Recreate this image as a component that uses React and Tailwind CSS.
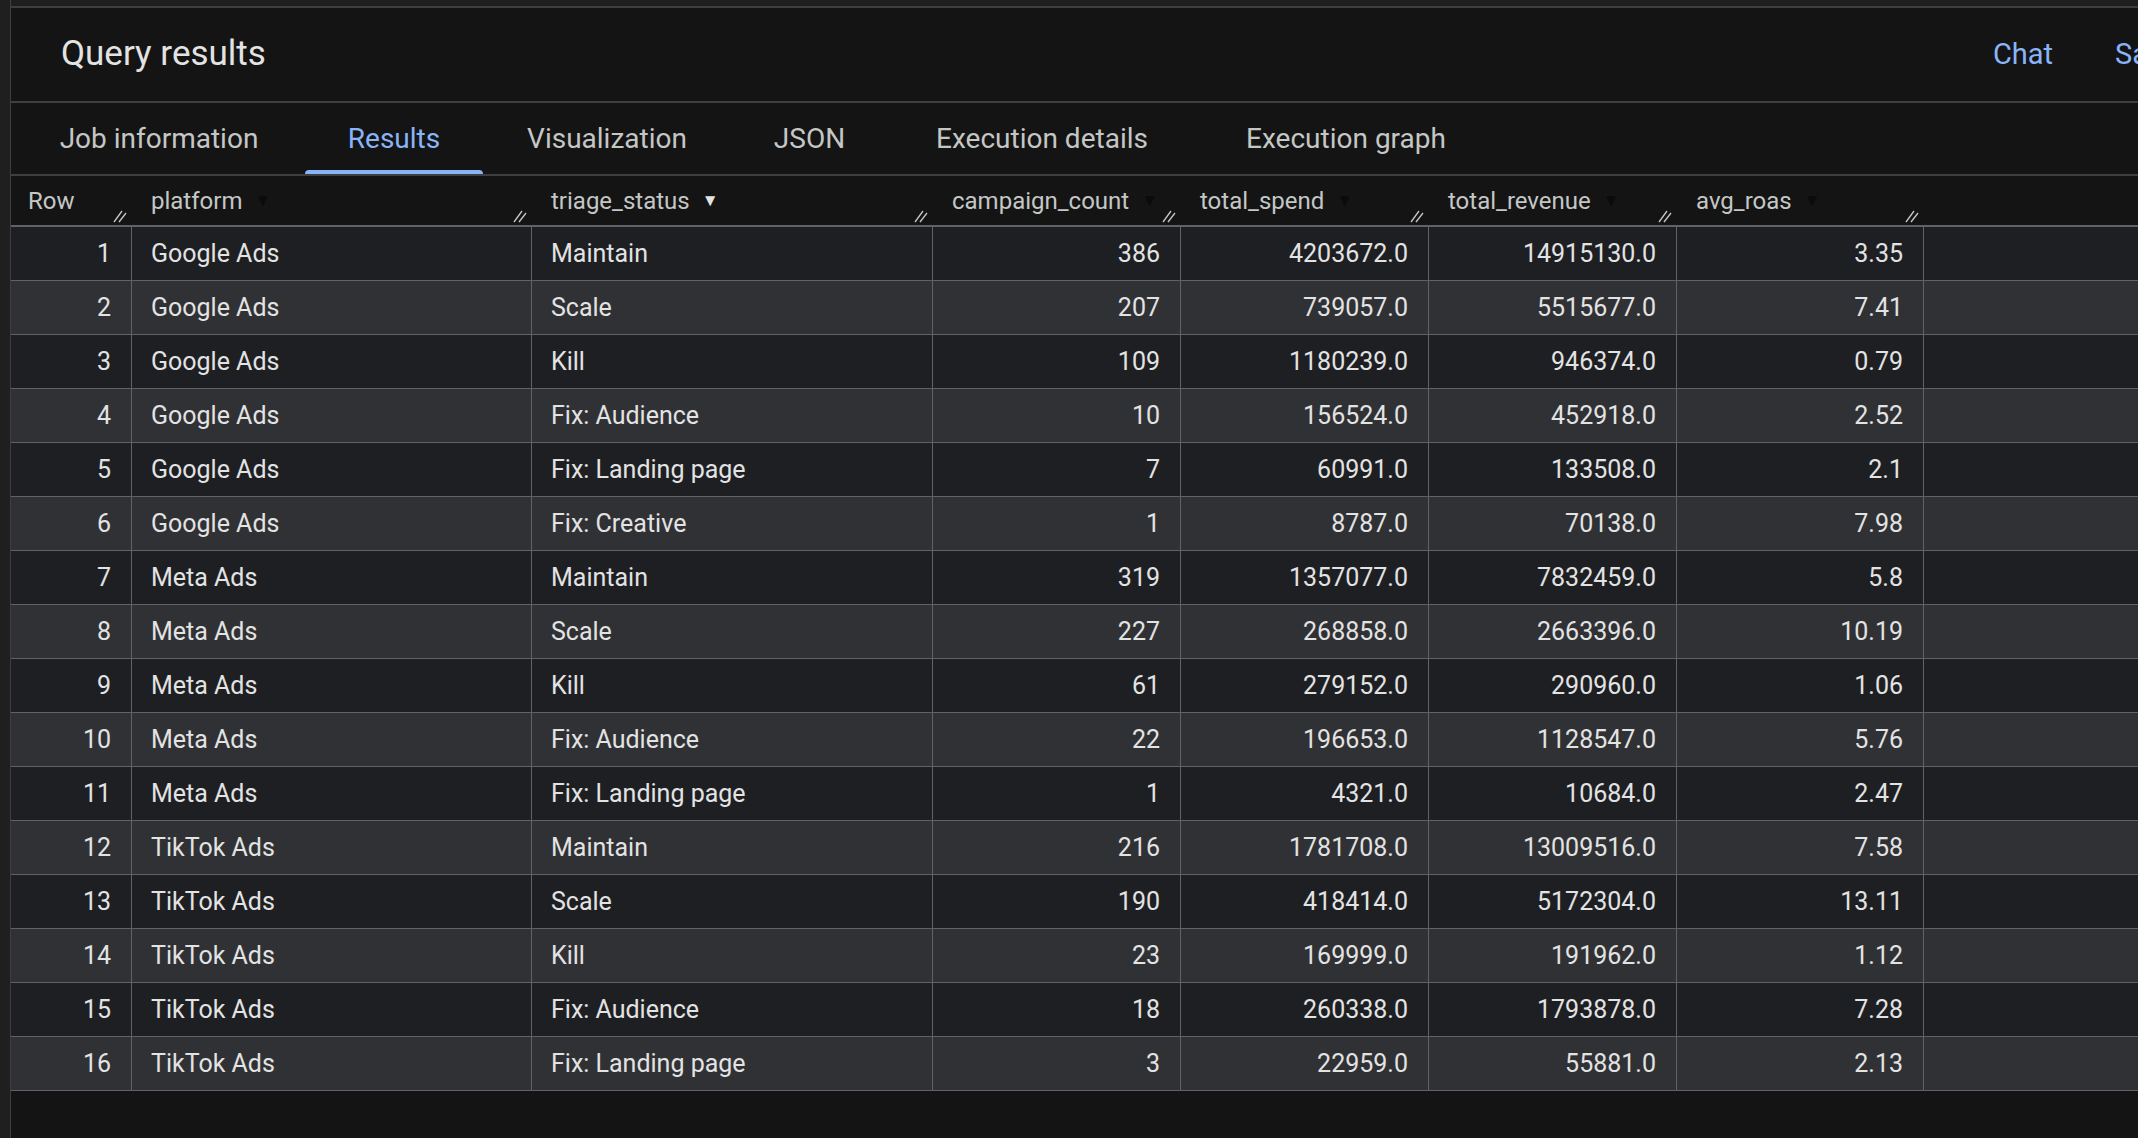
const rows = [
  [1, "Google Ads", "Maintain", 386, "4203672.0", "14915130.0", "3.35"],
  [2, "Google Ads", "Scale", 207, "739057.0", "5515677.0", "7.41"],
  [3, "Google Ads", "Kill", 109, "1180239.0", "946374.0", "0.79"],
  [4, "Google Ads", "Fix: Audience", 10, "156524.0", "452918.0", "2.52"],
  [5, "Google Ads", "Fix: Landing page", 7, "60991.0", "133508.0", "2.1"],
  [6, "Google Ads", "Fix: Creative", 1, "8787.0", "70138.0", "7.98"],
  [7, "Meta Ads", "Maintain", 319, "1357077.0", "7832459.0", "5.8"],
  [8, "Meta Ads", "Scale", 227, "268858.0", "2663396.0", "10.19"],
  [9, "Meta Ads", "Kill", 61, "279152.0", "290960.0", "1.06"],
  [10, "Meta Ads", "Fix: Audience", 22, "196653.0", "1128547.0", "5.76"],
  [11, "Meta Ads", "Fix: Landing page", 1, "4321.0", "10684.0", "2.47"],
  [12, "TikTok Ads", "Maintain", 216, "1781708.0", "13009516.0", "7.58"],
  [13, "TikTok Ads", "Scale", 190, "418414.0", "5172304.0", "13.11"],
  [14, "TikTok Ads", "Kill", 23, "169999.0", "191962.0", "1.12"],
  [15, "TikTok Ads", "Fix: Audience", 18, "260338.0", "1793878.0", "7.28"],
  [16, "TikTok Ads", "Fix: Landing page", 3, "22959.0", "55881.0", "2.13"],
];

const cols = [
  { name: "Row", w: "w-[121px]", sort: false },
  { name: "platform", w: "w-[400px]", sort: true },
  { name: "triage_status", w: "w-[401px]", sort: true, active: true },
  { name: "campaign_count", w: "w-[248px]", sort: true },
  { name: "total_spend", w: "w-[248px]", sort: true },
  { name: "total_revenue", w: "w-[248px]", sort: true },
  { name: "avg_roas", w: "w-[247px]", sort: true },
];

const tabs = [
  ["Job information", "w-[292px]"],
  ["Results", "w-[178px]"],
  ["Visualization", "w-[248px]"],
  ["JSON", "w-[157px]"],
  ["Execution details", "w-[308px]"],
  ["Execution graph", "w-[300px]"],
];

function Grip() {
  return (
    <svg width="16" height="16" viewBox="0 0 16 16" className="absolute right-[4px] bottom-[2px]">
      <path d="M2 15 L10 4 M7 15 L14 6" stroke="#c4c7c5" strokeWidth="1.3" />
    </svg>
  );
}

export default function App() {
  return (
    <div className="w-[2138px] h-[1138px] bg-[#141414] flex overflow-hidden text-[#e3e3e3]" style={{ fontFamily: "Roboto, 'Open Sans', sans-serif" }}>
      <div className="w-[11px] shrink-0 bg-[#1f1f1f] border-r border-[#3c4043]" />
      <div className="flex-1 flex flex-col min-w-0">
        <div className="h-[8px] bg-[#1f1f1f] border-b-2 border-[#3c4043]" />
        <div className="h-[95px] flex items-center pl-[50px] border-b-2 border-[#3c4043]">
          <div className="text-[35px] text-[#e3e3e3] flex-1">Query results</div>
          <div className="text-[29px] text-[#8ab4f8] mr-[62px]">Chat</div>
          <div className="text-[29px] text-[#8ab4f8] w-[23px] overflow-hidden whitespace-nowrap">Save</div>
        </div>
        <div className="h-[73px] flex items-stretch border-b-2 border-[#3c4043] pl-[2px]">
          {tabs.map(([t, w], i) => (
            <div key={t} className={`relative ${w} flex items-center justify-center text-[28px] ${i === 1 ? "text-[#8ab4f8]" : "text-[#c4c7c5]"}`}>
              {t}
              {i === 1 && <div className="absolute left-0 right-0 bottom-0 h-[4px] bg-[#8ab4f8] rounded-t" />}
            </div>
          ))}
        </div>
        <div className="h-[51px] flex border-b-2 border-[#5f6368] shrink-0">
          {cols.map((c) => (
            <div key={c.name} className={`${c.w} shrink-0 relative flex items-center pl-[19px] text-[24px] text-[#c4c7c5] gap-3`}>
              {c.name === "Row" ? <span className="-ml-[2px]">Row</span> : c.name}
              {c.sort && <span className={`text-[17px] ${c.active ? "text-[#e3e3e3]" : "text-[#0b0b0b]"}`}>▼</span>}
              <Grip />
            </div>
          ))}
        </div>
        {rows.map((r, i) => (
          <div key={r[0]} className={`h-[54px] flex shrink-0 border-b border-[#5f6368] text-[25px] ${i % 2 ? "bg-[#303134]" : "bg-[#1e1f22]"}`}>
            <div className="w-[121px] shrink-0 border-r border-[#5f6368] flex items-center justify-end pr-[20px]">{r[0]}</div>
            <div className="w-[400px] shrink-0 border-r border-[#5f6368] flex items-center pl-[19px]">{r[1]}</div>
            <div className="w-[401px] shrink-0 border-r border-[#5f6368] flex items-center pl-[19px]">{r[2]}</div>
            <div className="w-[248px] shrink-0 border-r border-[#5f6368] flex items-center justify-end pr-[20px]">{r[3]}</div>
            <div className="w-[248px] shrink-0 border-r border-[#5f6368] flex items-center justify-end pr-[20px]">{r[4]}</div>
            <div className="w-[248px] shrink-0 border-r border-[#5f6368] flex items-center justify-end pr-[20px]">{r[5]}</div>
            <div className="w-[247px] shrink-0 border-r border-[#5f6368] flex items-center justify-end pr-[20px]">{r[6]}</div>
            <div className="flex-1" />
          </div>
        ))}
      </div>
    </div>
  );
}
